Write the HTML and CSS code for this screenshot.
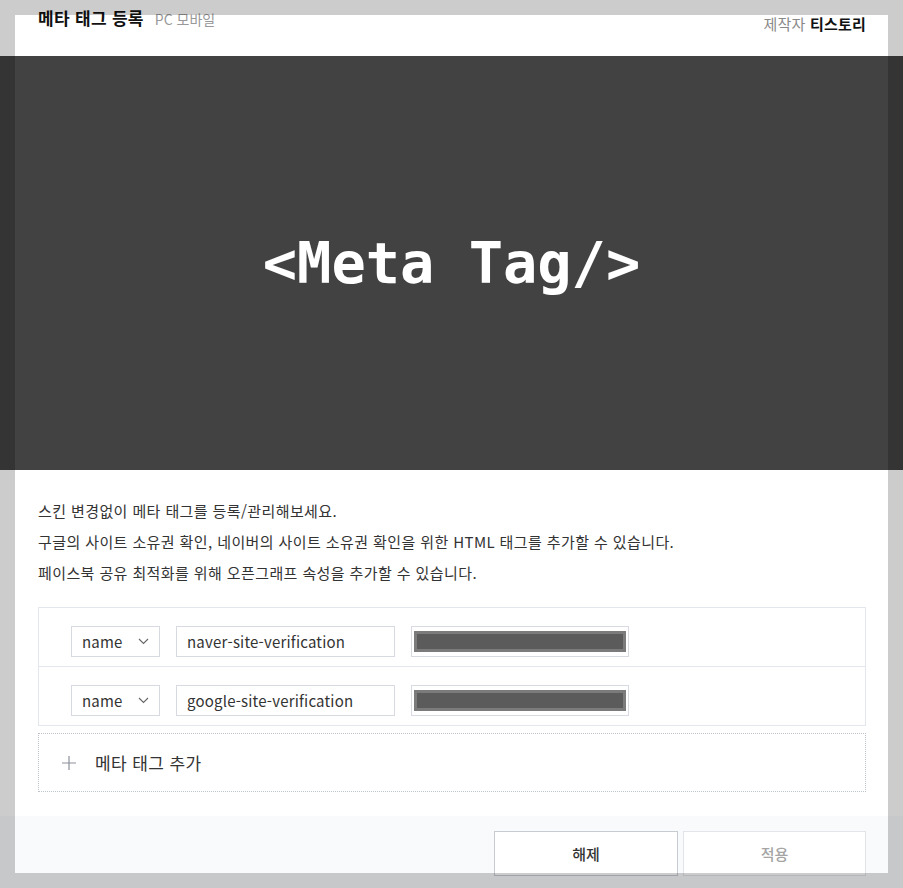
FILE: index.html
```html
<!DOCTYPE html>
<html lang="ko">
<head>
  <meta charset="UTF-8" />
  <meta name="viewport" content="width=device-width, initial-scale=1.0" />
  <title>메타 태그 등록</title>
  <link rel="stylesheet" href="styles.css">
</head>
<body>
  <div class="page">
    <div class="header">
      <div class="title">메타 태그 등록 <span class="device">PC 모바일</span></div>
      <div class="maker">제작자 <strong>티스토리</strong></div>
    </div>

    <div class="banner">&lt;Meta Tag/&gt;</div>

    <div class="content">
      <p class="desc">
        스킨 변경없이 메타 태그를 등록/관리해보세요.<br>
        구글의 사이트 소유권 확인, 네이버의 사이트 소유권 확인을 위한 HTML 태그를 추가할 수 있습니다.<br>
        페이스북 공유 최적화를 위해 오픈그래프 속성을 추가할 수 있습니다.
      </p>

      <div class="tag-list">
        <div class="tag-row">
          <div class="select">name
            <svg width="11" height="7" viewBox="0 0 11 7"><polyline points="1,1 5.5,5.5 10,1" fill="none" stroke="#666" stroke-width="1.1"/></svg>
          </div>
          <div class="field">naver-site-verification</div>
          <div class="field value"><span class="masked"></span></div>
        </div>
        <div class="tag-row">
          <div class="select">name
            <svg width="11" height="7" viewBox="0 0 11 7"><polyline points="1,1 5.5,5.5 10,1" fill="none" stroke="#666" stroke-width="1.1"/></svg>
          </div>
          <div class="field">google-site-verification</div>
          <div class="field value"><span class="masked"></span></div>
        </div>
      </div>

      <div class="add-tag">
        <svg width="16" height="16" viewBox="0 0 16 16"><path d="M8 1v14M1 8h14" stroke="#8b909a" stroke-width="1.2"/></svg>
        <span>메타 태그 추가</span>
      </div>
    </div>

    <div class="footer">
      <button class="btn">해제</button>
      <button class="btn disabled">적용</button>
    </div>
  </div>

  <div class="frame"></div>
</body>
</html>
```

FILE: styles.css
```css
body {
  margin: 0;
  background: #fff;
  font-family: "Noto Sans CJK KR", "Noto Sans", sans-serif;
  color: #333;
}
.page {
  height: 888px;
  display: flex;
  flex-direction: column;
}
.header {
  height: 56px;
  box-sizing: border-box;
  padding: 5px 37px 0 38px;
  display: flex;
  justify-content: space-between;
  align-items: flex-start;
}
.title {
  font-size: 17px;
  font-weight: 700;
  color: #111;
  line-height: 26px;
  letter-spacing: 0.3px;
}
.device {
  font-size: 14px;
  font-weight: 400;
  color: #999;
  margin-left: 6px;
  letter-spacing: 0;
}
.maker {
  font-size: 15px;
  color: #888;
  line-height: 22px;
  padding-top: 8px;
  letter-spacing: 0.2px;
}
.maker strong {
  color: #111;
  font-weight: 700;
}
.banner {
  height: 414px;
  background: #424242;
  color: #fff;
  font-family: "DejaVu Sans Mono", monospace;
  font-weight: 700;
  font-size: 57px;
  display: flex;
  align-items: center;
  justify-content: center;
}
.content {
  padding: 25px 37px 24px 38px;
}
.desc {
  margin: 0 0 19px;
  font-size: 15px;
  line-height: 31px;
  letter-spacing: 0.4px;
  color: #333;
}
.tag-list {
  border: 1px solid #e3e6ec;
}
.tag-row {
  display: flex;
  gap: 16px;
  padding: 18px 0 9px 32px;
}
.tag-row + .tag-row {
  border-top: 1px solid #e3e6ec;
}
.select, .field {
  height: 31px;
  box-sizing: border-box;
  border: 1px solid #d7dbe1;
  font-size: 15px;
  letter-spacing: 0.2px;
  color: #333;
  display: flex;
  align-items: center;
}
.select {
  width: 89px;
  padding: 0 10px;
  justify-content: space-between;
}
.field {
  width: 219px;
  padding: 0 10px;
}
.field.value {
  width: 218px;
  padding: 0 2px;
}
.masked {
  display: block;
  width: 207px;
  height: 15px;
  background: #5b5b5b;
  border: 3px solid #7b7b7b;
}
.add-tag {
  margin-top: 7px;
  height: 59px;
  box-sizing: border-box;
  border: 1px dotted #bfc4cc;
  display: flex;
  align-items: center;
  gap: 18px;
  padding-left: 22px;
  font-size: 17px;
  letter-spacing: 0.4px;
  color: #333;
}
.footer {
  flex: 1;
  background: #f9fafc;
  display: flex;
  justify-content: flex-end;
  gap: 5px;
  padding: 15px 37px 0 0;
  align-items: flex-start;
}
.btn {
  width: 184px;
  height: 45px;
  background: #fff;
  border: 1px solid #c7cbd2;
  font-family: inherit;
  font-size: 15px;
  font-weight: 500;
  color: #333;
}
.btn.disabled {
  width: 183px;
  border-color: #e1e4e9;
  color: #a5a5a5;
}
.frame {
  position: fixed;
  inset: 0;
  border: 15px solid rgba(0, 0, 0, 0.2);
  pointer-events: none;
}
```
